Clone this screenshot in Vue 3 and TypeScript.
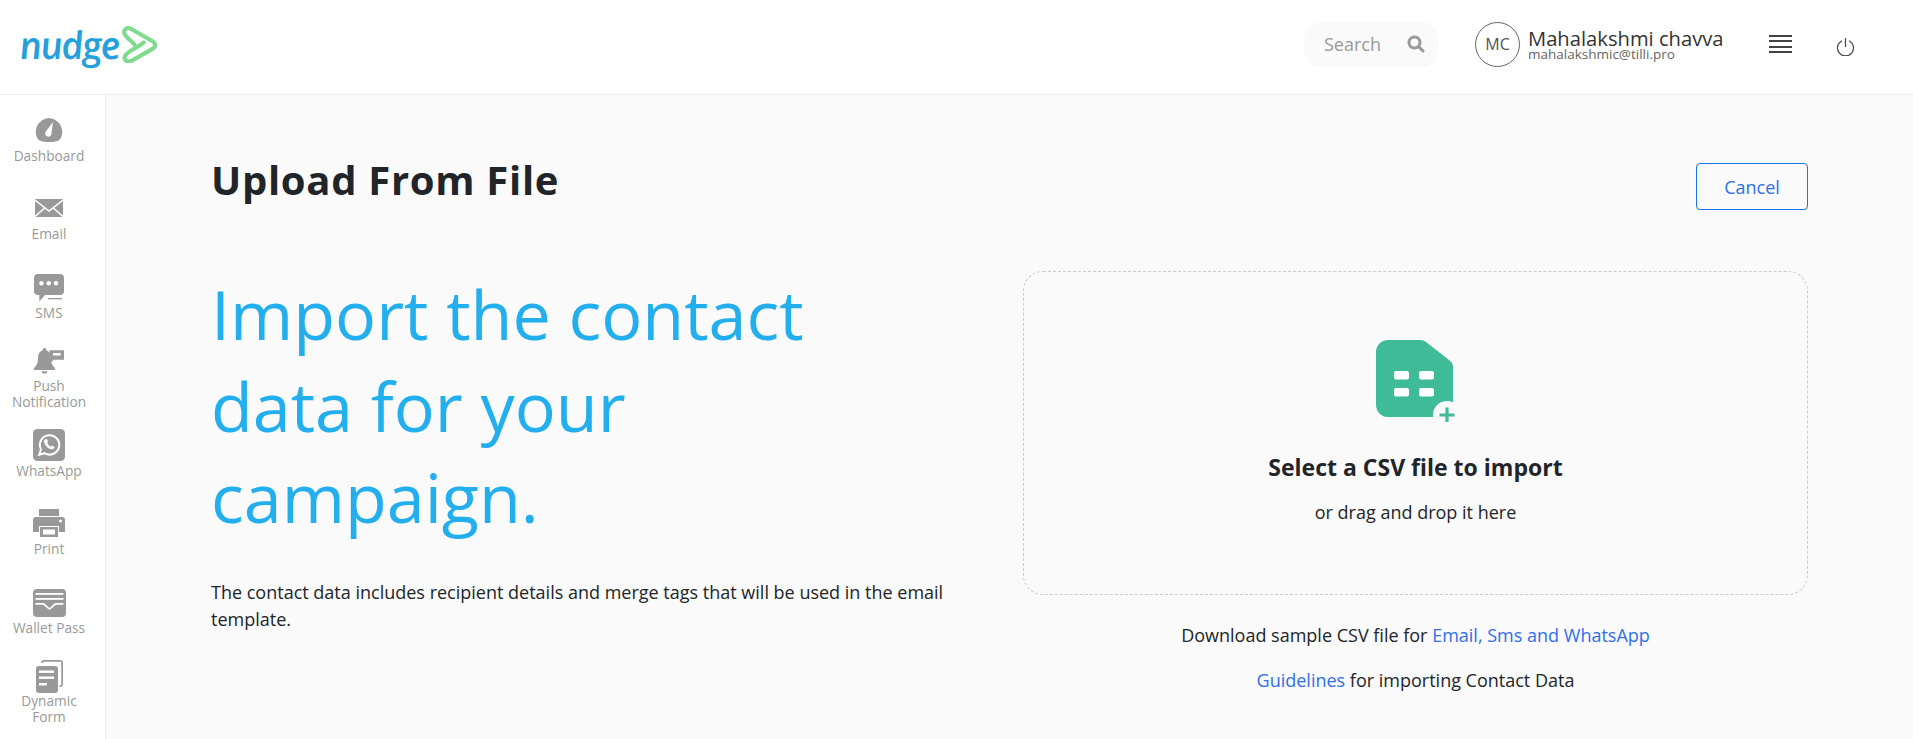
<script setup lang="ts">
interface NavItem { label: string[]; icon: string; w: number; h: number; mt: number; gap: number }
const nav: NavItem[] = [
  { label: ['Dashboard'], icon: 'dash', w: 28, h: 24, mt: 23, gap: 6 },
  { label: ['Email'], icon: 'mail', w: 28, h: 18, mt: 35, gap: 9 },
  { label: ['SMS'], icon: 'sms', w: 30, h: 28, mt: 32, gap: 3 },
  { label: ['Push', 'Notification'], icon: 'bell', w: 30, h: 26, mt: 27, gap: 4 },
  { label: ['WhatsApp'], icon: 'wa', w: 32, h: 32, mt: 19, gap: 2 },
  { label: ['Print'], icon: 'print', w: 32, h: 28, mt: 30, gap: 4 },
  { label: ['Wallet Pass'], icon: 'wallet', w: 33, h: 28, mt: 32, gap: 3 },
  { label: ['Dynamic', 'Form'], icon: 'form', w: 27, h: 33, mt: 24, gap: 0 },
]
</script>

<template>
  <div class="page">
    <header class="top">
      <div class="logo">
        <span class="logo-word">nudge</span>
        <svg class="logo-mark" width="36" height="37" viewBox="0 0 35 36" fill="none">
          <path d="M13 18 C9 13 3 10 3 6 C3 2 7 1 10 3 L31 15 C34 17 34 20 31 22 L10 34 C6 35.5 2 33 4 29 C7 24 15 22 22 16" stroke="#7edc8c" stroke-width="4" stroke-linejoin="round" stroke-linecap="round"/>
        </svg>
      </div>
      <div class="top-right">
        <div class="search">
          <span>Search</span>
          <svg width="18" height="18" viewBox="0 0 18 18" fill="none" stroke="#999" stroke-width="3"><circle cx="7.5" cy="7.5" r="5.5"/><path d="M11.5 11.5 L16 16" stroke-linecap="round"/></svg>
        </div>
        <div class="avatar">MC</div>
        <div class="who">
          <div class="name">Mahalakshmi chavva</div>
          <div class="mail">mahalakshmic@tilli.pro</div>
        </div>
        <div class="burger"><i></i><i></i><i></i><i></i></div>
        <svg class="power" width="19" height="18" viewBox="0 0 19 18" fill="none" stroke="#444" stroke-width="1.2"><path d="M9.5 0 V9"/><path d="M5.5 3 A8 8 0 1 0 13.5 3" stroke-linecap="round"/></svg>
      </div>
    </header>
    <div class="body">
      <aside class="side">
        <div v-for="n in nav" :key="n.icon" class="nav-item">
          <svg class="ico" :width="n.w" :height="n.h" :viewBox="`0 0 ${n.w} ${n.h}`" fill="#999" :style="{ marginTop: n.mt + 'px', marginBottom: n.gap + 'px' }">
            <template v-if="n.icon === 'dash'">
              <path d="M14 0 A14 14 0 0 1 25 21.5 C20 25 8 25 3 21.5 A14 14 0 0 1 14 0 Z"/>
              <path d="M18 4 L16.5 15 A3.2 3.2 0 1 1 10.6 13.8 Z" fill="#fff"/>
            </template>
            <template v-else-if="n.icon === 'mail'">
              <rect width="28" height="18"/>
              <path d="M0 1 L14 12 L28 1 M0 17.5 L10 8.7 M28 17.5 L18 8.7" fill="none" stroke="#fff" stroke-width="1.5"/>
            </template>
            <template v-else-if="n.icon === 'sms'">
              <path d="M4 0 H26 A4 4 0 0 1 30 4 V17 A4 4 0 0 1 26 21 H11 L5.3 27.5 V21 H4 A4 4 0 0 1 0 17 V4 A4 4 0 0 1 4 0 Z"/>
              <circle cx="7.5" cy="9.3" r="2.2" fill="#fff"/><circle cx="14.7" cy="9.3" r="2.2" fill="#fff"/><circle cx="22" cy="9.3" r="2.2" fill="#fff"/>
              <rect x="14" y="24" width="14" height="1.3"/>
            </template>
            <template v-else-if="n.icon === 'bell'">
              <path d="M10.5 0 C12 0 12.5 1.5 12.5 2.5 C16 3.5 17 7 17 11 C17 15 18.5 18 21 20 V22 H0 V20 C2.5 18 4 15 4 11 C4 7 5 3.5 8.5 2.5 C8.5 1.5 9 0 10.5 0 Z"/>
              <path d="M7.5 23.3 H13.5 C13 26.5 8 26.5 7.5 23.3 Z"/>
              <path d="M15.5 2.3 H30 V11.8 H19.5 L17 14.5 V9 L15.5 6 Z"/>
              <rect x="19" y="5" width="7.5" height="2.6" fill="#fff"/>
            </template>
            <template v-else-if="n.icon === 'wa'">
              <rect width="32" height="32" rx="4.5"/>
              <path d="M6.2 25.8 L8 20.4 A9.7 9.7 0 1 1 11.6 24.2 Z" fill="none" stroke="#fff" stroke-width="2"/>
              <path d="M12 10.3 C10.6 11.3 10.6 13.6 12.5 16.2 C14.5 19.2 18 21 20 20 C21.4 19.2 21.8 18.2 21.4 17.7 L19 16.5 L17.9 17.7 C16.2 17 14.8 15.4 14.2 13.8 L15.2 12.7 L14 10.3 Z" fill="#fff"/>
            </template>
            <template v-else-if="n.icon === 'print'">
              <rect x="6" y="0" width="20" height="7"/>
              <path d="M3 8 H29 A3 3 0 0 1 32 11 V23 H26 V17 H6 V23 H0 V11 A3 3 0 0 1 3 8 Z"/>
              <path d="M7 18 H25 V28 H7 Z M10 20.5 V25.5 H22 V20.5 Z" fill-rule="evenodd"/>
              <circle cx="27.5" cy="12" r="1.5" fill="#fff"/>
            </template>
            <template v-else-if="n.icon === 'wallet'">
              <rect width="33" height="28" rx="4"/>
              <rect x="2.5" y="4" width="28" height="1.8" fill="#fff"/><rect x="2.5" y="9" width="28" height="1.8" fill="#fff"/>
              <path d="M2.5 14 H11 L16.5 19 L22 14 H30.5 V15.8 H23 L16.5 21 L10 15.8 H2.5 Z" fill="#fff"/>
            </template>
            <template v-else>
              <path d="M8 0 H24 A3 3 0 0 1 27 3 V24 A3 3 0 0 1 24 27 H23.5 V25.3 H24 A1.3 1.3 0 0 0 25.3 24 V3 A1.3 1.3 0 0 0 24 1.7 H8 A1.3 1.3 0 0 0 6.7 3 H5 A3 3 0 0 1 8 0 Z"/>
              <rect x="0" y="6" width="22" height="27" rx="3"/>
              <rect x="3" y="10.5" width="15" height="2.4" fill="#fff"/><rect x="3" y="16.5" width="15" height="2.4" fill="#fff"/><rect x="3" y="23" width="8" height="2.4" fill="#fff"/>
            </template>
          </svg>
          <div class="nav-label"><div v-for="l in n.label" :key="l">{{ l }}</div></div>
        </div>
      </aside>
      <main class="main">
        <div class="head">
          <h1>Upload From File</h1>
          <button class="cancel">Cancel</button>
        </div>
        <div class="cols">
          <section class="left">
            <h2>Import the contact<br>data for your<br>campaign.</h2>
            <p>The contact data includes recipient details and merge tags that will be used in the email template.</p>
          </section>
          <section class="right">
            <div class="drop">
              <svg class="csv" width="84" height="84" viewBox="0 0 84 84">
                <path d="M14 2 H46 A9 9 0 0 1 52 4 L75 22 A9 9 0 0 1 79 28 V67 A12 12 0 0 1 67 79 H14 A12 12 0 0 1 2 67 V14 A12 12 0 0 1 14 2 Z" fill="#3fbb97"/>
                <circle cx="73" cy="77" r="14" fill="#fafafa"/>
                <path d="M73 69.5 V84.5 M65.5 77 H80.5" stroke="#3fbb97" stroke-width="3.2"/>
                <g fill="#fff"><rect x="20" y="33" width="15" height="8.5" rx="2"/><rect x="45" y="33" width="15" height="8.5" rx="2"/><rect x="20" y="50" width="15" height="8.5" rx="2"/><rect x="45" y="50" width="15" height="8.5" rx="2"/></g>
              </svg>
              <div class="sel">Select a CSV file to import</div>
              <div class="or">or drag and drop it here</div>
            </div>
            <div class="dl">Download sample CSV file for <a>Email, Sms and WhatsApp</a></div>
            <div class="gl"><a>Guidelines</a> for importing Contact Data</div>
          </section>
        </div>
      </main>
    </div>
  </div>
</template>

<style>
html, body { margin: 0; overflow: hidden; }
</style>

<style scoped>
.page { width: 1913px; height: 739px; background: #fafafa; font-family: "Open Sans", sans-serif; color: #212529; overflow: hidden; }
.top { height: 88px; padding-bottom: 6px; background: #fff; border-bottom: 1px solid #eee; display: flex; justify-content: space-between; align-items: center; }
.logo { display: flex; align-items: center; margin-left: 19px; }
.logo-word { display: inline-block; transform: skewX(7deg); font-family: "Open Sans", sans-serif; font-style: italic; font-weight: 600; font-size: 38px; line-height: 40px; color: #24a0dc; letter-spacing: -1.6px; }
.logo-mark { margin-left: 3px; }
.top-right { display: flex; align-items: center; margin-right: 58px; }
.search { width: 135px; height: 45px; background: #fafafa; border-radius: 18px; display: flex; align-items: center; justify-content: space-between; box-sizing: border-box; padding: 0 14px 0 20px; font-size: 18px; color: #999; }
.avatar { width: 45px; height: 45px; box-sizing: border-box; border: 1px solid #666; border-radius: 50%; margin-left: 36px; display: flex; align-items: center; justify-content: center; font-size: 16px; color: #555; }
.who { margin-left: 8px; width: 241px; }
.name { font-size: 20.2px; line-height: 20px; color: #333; }
.mail { font-size: 13.5px; line-height: 12px; color: #666; }
.burger { width: 23px; display: flex; flex-direction: column; gap: 3.3px; }
.burger i { display: block; height: 2px; background: #444; }
.power { margin-left: 44px; margin-top: 5px; }
.body { display: flex; height: 644px; }
.side { width: 98px; padding-right: 7px; background: #fff; border-right: 1px solid #eee; flex: none; }
.nav-item { display: flex; flex-direction: column; align-items: center; }
.ico { display: block; flex: none; }
.nav-label { font-size: 13.7px; line-height: 16px; color: #999; text-align: center; white-space: nowrap; }
.main { flex: 1; padding: 0 105px; }
.head { display: flex; justify-content: space-between; padding-top: 61px; }
h1 { margin: -1px 0 0; font-size: 40px; font-weight: 700; line-height: 50px; letter-spacing: 0.7px; color: #212529; }
.cancel { width: 112px; height: 47px; margin-top: 7px; border: 1px solid #1a73e8; border-radius: 4px; background: transparent; font: 400 18px "Open Sans", sans-serif; color: #2f6fed; }
.cols { display: flex; justify-content: space-between; margin-top: 61px; }
.left { width: 760px; }
h2 { margin: -3px 0 0; font-size: 68.3px; line-height: 91.5px; font-weight: 400; color: #23aeee; }
p { margin: 36px 0 0; font-size: 18px; line-height: 27px; color: #212529; }
.right { width: 785px; text-align: center; font-size: 18px; color: #212529; }
.drop { height: 324px; box-sizing: border-box; border: 1px dashed #ccc; border-radius: 20px; display: flex; flex-direction: column; align-items: center; padding-top: 66px; }
.csv { width: 84px; height: 84px; }
.sel { font-size: 23px; font-weight: 700; color: #212529; margin-top: 30px; line-height: 30px; }
.or { margin-top: 15px; line-height: 30px; }
.dl { margin-top: 25px; line-height: 30px; }
.gl { margin-top: 15px; line-height: 30px; }
a { color: #2f6fed; }
</style>
